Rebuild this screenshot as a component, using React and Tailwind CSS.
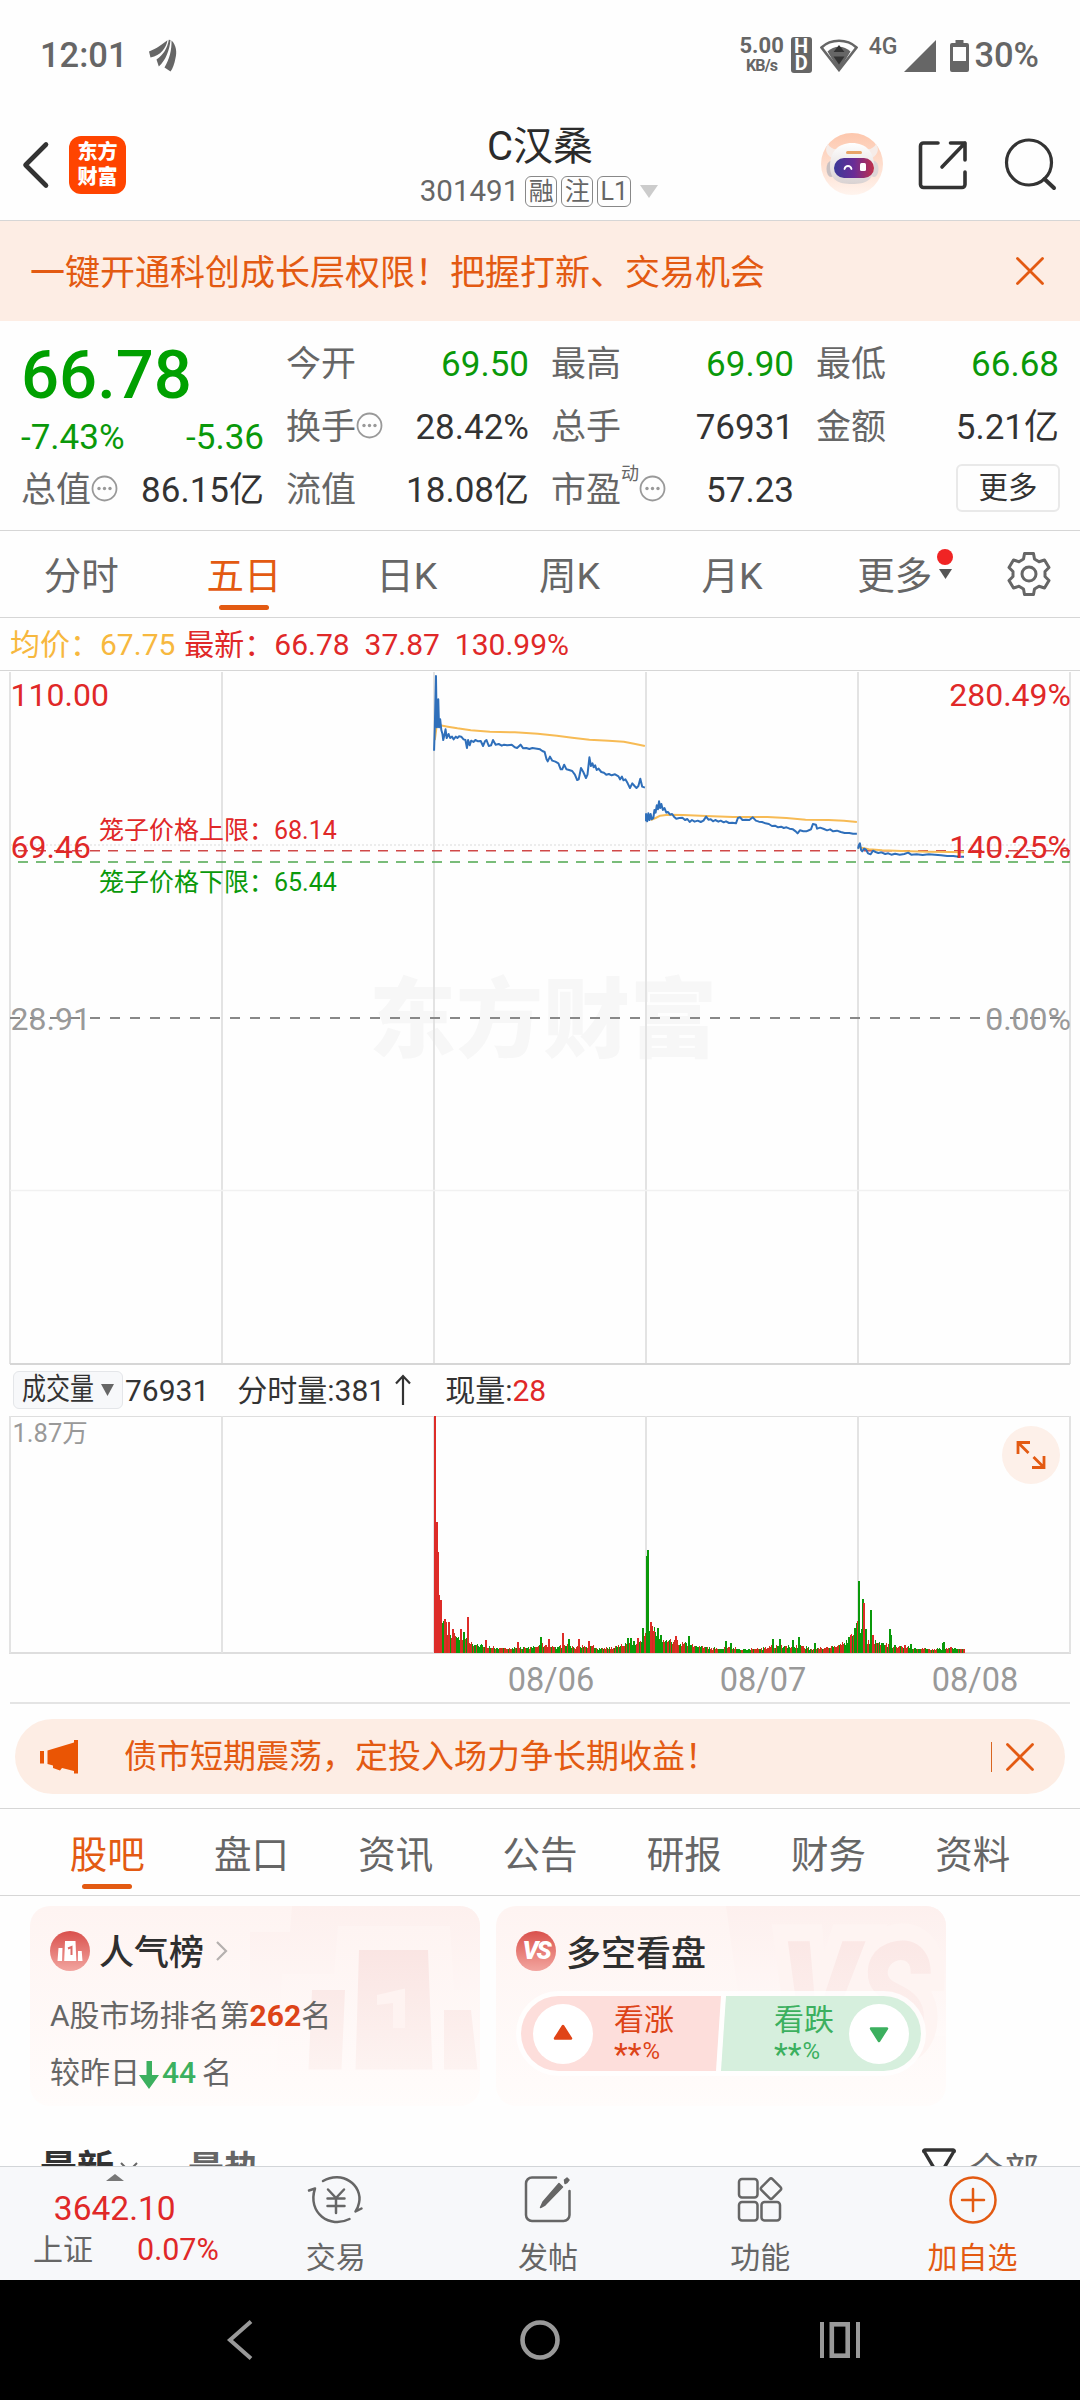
import React from "react";

const RED = "#e02828";
const GREEN = "#0a990a";
const ORANGE = "#e35a12";

/* ---------- small shared drawings ---------- */

function Dots() {
  return (
    <svg className="block h-[27px] w-[27px] shrink-0" viewBox="0 0 27 27" fill="none">
      <circle cx="13.5" cy="13.5" r="12" stroke="#999" strokeWidth="1.8" />
      <circle cx="8" cy="13.5" r="1.7" fill="#999" />
      <circle cx="13.5" cy="13.5" r="1.7" fill="#999" />
      <circle cx="19" cy="13.5" r="1.7" fill="#999" />
    </svg>
  );
}

function Cross() {
  return (
    <svg className="block h-[30px] w-[30px]" viewBox="0 0 30 30" stroke={ORANGE} strokeWidth="2.8" strokeLinecap="round">
      <path d="M2.5 2.5 27.5 27.5M27.5 2.5 2.5 27.5" />
    </svg>
  );
}

/* ---------- status bar ---------- */

function StatusBar() {
  return (
    <div className="flex h-[110px] items-center pl-[40px] pr-[41px] text-[#666]">
      <span className="text-[34.500px] font-medium leading-[34px]">12:01</span>
      <svg className="ml-[21px] h-[33px] w-[28px]" viewBox="0 0 28 33" fill="#666">
        <path d="M0 12.500C8 9.500 13 5 18.500 1.200 17 9 12 16.500 1.500 18.500Z" />
        <path d="M19.800.800 21.500 1C20.500 11 17 21 9.800 27.500L7.500 20.500C14 16.500 18.500 9 19.800.800Z" />
        <path d="M22.500 1.500C27.500 6 28 14 26.500 19 25.500 25 23.500 30 21.500 32.500L15.500 28.500C20.500 20 22.800 11 22.500 1.500Z" />
      </svg>
      <div className="ml-auto flex items-center">
        <div className="flex w-[42px] flex-col items-center font-bold">
          <span className="text-[22px] leading-[20px]">5.00</span>
          <span className="text-[16px] leading-[19px] tracking-[-0.8px]">KB/s</span>
        </div>
        <div className="ml-[8px] flex h-[36px] w-[21px] flex-col items-center justify-center rounded-[3px] bg-[#666] font-bold text-white">
          <span className="text-[20px] leading-[17px]">H</span>
          <span className="text-[20px] leading-[17px]">D</span>
        </div>
        <svg className="ml-[8px] h-[33px] w-[38px]" viewBox="0 0 38 33">
          <path d="M1.500 8.500C11-.5 27-.5 36.500 8.500L19 31Z" fill="#fff" stroke="#666" strokeWidth="2.600" />
          <path d="M7.500 12.500C14 6 24 6 30.500 12.500L19 31.500Z" fill="#666" />
          <path d="M13.500 13 19 6l5.500 7ZM13.500 17.500h11L19 25.500Z" fill="#333" />
        </svg>
        <span className="mb-[18px] ml-[11px] text-[23px] font-medium leading-[23px]">4G</span>
        <svg className="ml-[7px] h-[33px] w-[32px]" viewBox="0 0 32 33"><path d="M0 33 32 1V33Z" fill="#666" /></svg>
        <svg className="ml-[14px] h-[33px] w-[19px]" viewBox="0 0 19 33">
          <path d="M5.500 1h8v3H17a2 2 0 0 1 2 2v25a2 2 0 0 1-2 2H2a2 2 0 0 1-2-2V6a2 2 0 0 1 2-2h3.500ZM3 8v14h13V8Z" fill="#666" fillRule="evenodd" />
        </svg>
        <span className="ml-[5px] text-[34.500px] font-medium leading-[34px]">30%</span>
      </div>
    </div>
  );
}

/* ---------- header ---------- */

function Robot() {
  return (
    <svg className="mb-[2px] block h-[64px] w-[64px]" viewBox="0 0 64 64">
      <defs>
        <linearGradient id="rb" x1="0" y1="0" x2="0" y2="1">
          <stop offset="0" stopColor="#fdc7ad" />
          <stop offset="1" stopColor="#fff4ee" />
        </linearGradient>
        <linearGradient id="rv" x1="0" y1="0" x2="1" y2="0">
          <stop offset="0" stopColor="#3a3a98" />
          <stop offset=".5" stopColor="#6a2c96" />
          <stop offset="1" stopColor="#c0304a" />
        </linearGradient>
        <linearGradient id="rh" x1="0" y1="0" x2="0" y2="1">
          <stop offset="0" stopColor="#fff" />
          <stop offset="1" stopColor="#d9d2d2" />
        </linearGradient>
      </defs>
      <circle cx="32" cy="32" r="31" fill="url(#rb)" />
      <path d="M12 26C5 22 5 16 8 12c2 4 6 6 11 5ZM52 26c7-4 7-10 4-14-2 4-6 6-11 5Z" fill="#f6ece8" />
      <ellipse cx="11" cy="37" rx="4.500" ry="8" fill="#c8c0c2" />
      <ellipse cx="54" cy="37" rx="4.500" ry="8" fill="#ddd5d6" />
      <path d="M32 11C46 11 54 20 54 34S46 52 32 52 10 48 10 34 18 11 32 11Z" fill="url(#rh)" />
      <rect x="26" y="19" width="16" height="3" rx="1.500" fill="#e8a468" />
      <rect x="14" y="26" width="40" height="20" rx="10" fill="url(#rv)" />
      <path d="M24.500 37c1-4 6-4 7 0" stroke="#fff" strokeWidth="1.800" fill="none" strokeLinecap="round" />
      <rect x="40" y="31" width="6" height="8" rx="1.500" fill="#fff" />
    </svg>
  );
}

function Header() {
  return (
    <div className="grid h-[111px] grid-cols-[1fr_auto_1fr] border-b border-[#d6d6d6]">
      <div className="flex items-center pb-[1px] pl-[20px]">
        <svg className="h-[50px] w-[32px]" viewBox="0 0 32 50" fill="none" stroke="#333" strokeWidth="4.600" strokeLinecap="round" strokeLinejoin="round">
          <path d="M26 4.500 5.500 25 26 45.500" />
        </svg>
        <div className="ml-[17px] flex h-[58px] w-[57px] flex-col items-center justify-center rounded-[12px] bg-[#ff4400] text-[20px] font-black leading-[25px] text-white">
          <span>东方</span>
          <span>财富</span>
        </div>
      </div>
      <div className="flex flex-col items-center pt-[15px]">
        <div className="text-[40px] leading-[44px] text-[#2b2b2b]">C汉桑</div>
        <div className="mr-[2px] mt-[4px] flex h-[36px] items-center gap-[4px] text-[#666]">
          <span className="mr-[2px] text-[29.500px] leading-[36px]">301491</span>
          <span className="flex h-[31px] w-[32px] items-center justify-center rounded-[6px] border border-[#888] text-[25px] leading-[29px]">融</span>
          <span className="flex h-[31px] w-[32px] items-center justify-center rounded-[6px] border border-[#888] text-[25px] leading-[29px]">注</span>
          <span className="flex h-[31px] w-[34px] items-center justify-center rounded-[6px] border border-[#888] text-[25px] leading-[29px]">L1</span>
          <svg className="ml-[5px] h-[13px] w-[18px]" viewBox="0 0 18 13"><path d="M0 0h18L9 13Z" fill="#ccc" /></svg>
        </div>
      </div>
      <div className="flex items-center justify-end pr-[23px]">
        <Robot />
        <svg className="ml-[33px] h-[52px] w-[52px]" viewBox="0 0 52 52" fill="none" stroke="#333" strokeWidth="3.600" strokeLinecap="round" strokeLinejoin="round">
          <path d="M21 4H6.500a3 3 0 0 0-3 3v38.500a3 3 0 0 0 3 3H45a3 3 0 0 0 3-3V33" />
          <path d="M33.500 4H48v17M48 4 25 28" />
        </svg>
        <svg className="ml-[34px] h-[56px] w-[54px]" viewBox="0 0 54 56" fill="none" stroke="#333" strokeWidth="3.200" strokeLinecap="round">
          <circle cx="26" cy="25.500" r="22.500" />
          <path d="M41.500 42 51 51" strokeWidth="4" />
        </svg>
      </div>
    </div>
  );
}

function Banner() {
  return (
    <div className="flex h-[100px] items-center justify-between bg-[#fdede4] pl-[30px] pr-[35px]">
      <span className="pt-[5px] text-[35px] leading-[44px] text-[#e35a12]">一键开通科创成长层权限！把握打新、交易机会</span>
      <Cross />
    </div>
  );
}

/* ---------- quote summary ---------- */

function Stat({ label, sup, dots, value, green }) {
  return (
    <div className="flex h-[63px] items-center justify-between text-[35px] leading-[63px]">
      <span className="flex items-center text-[#666]">
        {label}
        {sup && <span className="self-start text-[18px] leading-[30px]">{sup}</span>}
        {dots && <span className="mb-[5px]"><Dots /></span>}
      </span>
      <span className={green ? "text-[#0a990a]" : "text-[#333]"}>{value}</span>
    </div>
  );
}

function Summary() {
  return (
    <div className="grid h-[210px] grid-cols-[243px_243px_243px_243px] gap-x-[22px] border-b border-[#d6d6d6] pl-[21px] pt-[12px]">
      <div>
        <div className="h-[84px] text-[67px] font-medium leading-[84px] text-[#00a000]">66.78</div>
        <div className="flex h-[42px] justify-between text-[35px] leading-[42px] text-[#0a990a]">
          <span>-7.43%</span>
          <span>-5.36</span>
        </div>
        <Stat label="总值" dots value="86.15亿" />
      </div>
      <div>
        <Stat label="今开" value="69.50" green />
        <Stat label="换手" dots value="28.42%" />
        <Stat label="流值" value="18.08亿" />
      </div>
      <div>
        <Stat label="最高" value="69.90" green />
        <Stat label="总手" value="76931" />
        <Stat label="市盈" sup="动" dots value="57.23" />
      </div>
      <div>
        <Stat label="最低" value="66.68" green />
        <Stat label="金额" value="5.21亿" />
        <div className="flex h-[63px] items-center justify-end pb-[5px]">
          <span className="mr-[-1px] flex h-[48px] w-[104px] items-center justify-center rounded-[6px] border-2 border-[#e9e9e9] text-[29.500px] leading-[40px] text-[#333]">更多</span>
        </div>
      </div>
    </div>
  );
}

/* ---------- period tabs ---------- */

function PeriodTabs() {
  const tabs = ["分时", "五日", "日K", "周K", "月K"];
  return (
    <div className="flex h-[87px] border-b border-[#d6d6d6] text-[37.500px] leading-[90px] text-[#666]">
      {tabs.map((t, i) => (
        <div key={t} className={i === 1 ? "relative w-[162.700px] text-center text-[#e35a12]" : "w-[162.700px] text-center"}>
          {t}
          {i === 1 && <span className="absolute bottom-[7px] left-[56px] h-[5px] w-[50px] rounded-full bg-[#e35a12]" />}
        </div>
      ))}
      <div className="relative w-[162.700px] text-center">
        更多
        <span className="absolute left-[124px] top-[18px] h-[16px] w-[16px] rounded-full bg-[#f02424]" />
        <svg className="absolute left-[125.500px] top-[38px] h-[10px] w-[13px]" viewBox="0 0 13 10"><path d="M0 0h13L6.500 10Z" fill="#555" /></svg>
      </div>
      <svg className="ml-[30px] mt-[20px] h-[46px] w-[46px]" viewBox="0 0 46 46" fill="none" stroke="#666" strokeWidth="3" strokeLinejoin="round">
        <path d="M18.500 2.500h9l1 5.500 4.500 2.700 5.500-1.700 4.500 7.500-4 4v5l4 4-4.500 7.500-5.500-1.700-4.500 2.700-1 5.500h-9l-1-5.500-4.500-2.700-5.500 1.700L3 29.500l4-4v-5l-4-4L7.500 9l5.500 1.700L17.500 8Z" />
        <circle cx="23" cy="23" r="7" />
      </svg>
    </div>
  );
}

function Legend() {
  return (
    <div className="flex h-[52px] whitespace-pre pl-[10px] text-[30px] leading-[54px]">
      <span className="text-[#f7b83e]">均价：67.75</span>
      <span className="ml-[9px] text-[#e02828]">最新：66.78  37.87  130.99%</span>
    </div>
  );
}

/* ---------- price chart ---------- */

const GRID_X = [10, 222, 434, 646, 858, 1070];

const PRICE = [
  "89,272 91,200 94,48 96,202 98,200 100,118 102,202 105,178 108,210 111,222 113,240 116,226 119,208 122,234 127,222 131,234 136,230 140,238 146,230 150,234 154,229 160,230 166,238 171,240 175,264 178,240 182,256 186,242 192,246 197,240 204,244 211,243 217,258 222,244 226,240 232,258 238,256 243,240 250,254 258,252 266,257 272,254 280,256 292,254 300,262 306,264 315,254 322,265 330,264 338,267 346,264 358,266 366,268 372,273 378,276 383,298 386,304 392,290 398,302 406,305 414,310 420,328 424,328 429,314 435,328 442,330 450,333 457,344 463,360 467,358 473,324 479,336 486,354 490,344 495,292 499,318 503,310 506,322 510,316 514,330 519,326 526,336 533,338 539,344 546,342 553,346 562,343 571,349 575,358 580,350 584,361 589,358 595,370 601,384 607,370 613,378 618,384 623,378 628,356 633,380 640,383",
  "643,484 643,462 646,484 649,460 652,480 655,462 658,478 662,474 665,450 668,458 671,436 674,448 677,424 680,444 683,432 687,450 691,444 696,458 700,456 706,464 711,462 716,470 722,476 730,474 738,473 745,480 751,477 757,486 763,480 770,485 778,482 786,486 793,482 800,470 806,479 812,478 818,484 824,480 832,485 838,482 846,487 852,484 860,489 868,488 878,490 883,474 889,472 895,480 904,479 913,480 922,472 930,482 938,485 946,486 955,490 964,492 972,498 980,497 988,502 996,500 1003,504 1010,502 1018,506 1027,508 1034,514 1039,520 1045,511 1054,514 1062,514 1070,510 1074,508 1079,492 1087,494 1090,506 1098,503 1108,507 1116,511 1124,508 1132,514 1142,512 1152,516 1162,519 1174,519 1184,521 1194,521",
  "1197,566 1199,556 1202,550 1205,570 1208,574 1213,566 1218,569 1223,580 1230,583 1236,572 1243,576 1250,579 1258,577 1268,582 1276,580 1284,584 1294,581 1306,584 1318,582 1328,578 1336,584 1350,583 1366,585 1382,583 1398,584 1414,586 1430,588 1446,588 1460,590 1474,590",
];

const AVERAGE = [
  "91,240 96,196 105,196 125,200 150,205 185,211 235,215 300,217 360,221 410,227 450,233 495,239 545,242 585,245 615,252 640,258",
  "655,480 668,474 680,467 700,464 740,465 800,468 870,471 960,471 1010,474 1060,479 1120,480 1160,482 1194,486",
  "1200,562 1225,568 1260,571 1310,573 1380,575 1440,576 1474,577",
];

function PriceChart() {
  return (
    <svg className="block h-[695px] w-[1080px]" viewBox="0 0 1080 695" fontFamily='Roboto, "Noto Sans CJK SC", sans-serif'>
      <rect x="0" y="0" width="1080" height="1" fill="#d6d6d6" />
      <text x="369" y="381" fontSize="87" fontWeight="900" fill="#f7f7f7">东方财富</text>
      {GRID_X.map((x) => (
        <rect key={x} x={x - 1} y="2" width="2" height="692" fill="#e3e3e3" />
      ))}
      <rect x="10" y="693" width="1060" height="2" fill="#d6d6d6" />
      <path d="M10 520.500H1070" stroke="#f1f1f1" strokeWidth="1.500" />
      <path d="M10 175H1070" stroke="#e6e6e6" strokeWidth="1.500" strokeDasharray="2 2" />
      <path d="M10 348H1070" stroke="#888" strokeWidth="2" strokeDasharray="10 10" />
      <path d="M18 180.700H1070" stroke="#d04848" strokeWidth="1.400" strokeDasharray="10 8" />
      <path d="M18 192H1070" stroke="#4da64d" strokeWidth="1.400" strokeDasharray="10 8" />
      <g transform="translate(400 -10) scale(.38265 .33333)" fill="none" strokeLinejoin="round">
        {AVERAGE.map((p, i) => (
          <polyline key={i} points={p} stroke="#f7bb55" strokeWidth="2" vectorEffect="non-scaling-stroke" />
        ))}
        {PRICE.map((p, i) => (
          <polyline key={i} points={p} stroke="#2f6fba" strokeWidth="2" vectorEffect="non-scaling-stroke" />
        ))}
      </g>
      <g fontSize="32">
        <text x="10.500" y="35.500" fill={RED}>110.00</text>
        <text x="10.500" y="187.500" fill={RED}>69.46</text>
        <text x="10.500" y="360" fill="#999">28.91</text>
        <text x="1071" y="35.500" fill={RED} textAnchor="end">280.49%</text>
        <text x="1071" y="187.500" fill={RED} textAnchor="end">140.25%</text>
        <text x="1071" y="360" fill="#999" textAnchor="end">0.00%</text>
      </g>
      <g fontSize="25">
        <text x="99" y="169" fill={RED}>笼子价格上限：68.14</text>
        <text x="99" y="221" fill={GREEN}>笼子价格下限：65.44</text>
      </g>
    </svg>
  );
}

/* ---------- volume chart ---------- */

const ENVELOPE = [
  [434, 100], [435, 130], [437, 90], [439, 55], [441, 34], [445, 30], [450, 24], [456, 16], [462, 18], [468, 16], [472, 9],
  [482, 8], [500, 5], [530, 6], [546, 10], [556, 6], [566, 9], [575, 6], [590, 8], [598, 5], [612, 6], [624, 10], [636, 12],
  [643, 15], [646, 30], [650, 30], [656, 22], [662, 15], [680, 11], [690, 11], [700, 7], [712, 5], [735, 6], [742, 4],
  [762, 5], [775, 8], [790, 7], [800, 8], [812, 4], [832, 7], [845, 11], [852, 20], [857, 30], [862, 30], [866, 14],
  [873, 12], [884, 9], [900, 7], [915, 6], [930, 4], [955, 5], [964, 4],
];

const SPIKES = [
  [434, 100, 1], [434, 237, 1], [436, 131, 1], [437, 101, 1], [438, 58, 1], [440, 53, 1], [444, 34, 1], [448, 31, 1],
  [452, 24, 1], [460, 24, 1], [463, 21, 0], [467, 36, 1], [485, 13, 1], [517, 11, 1], [540, 16, 0], [548, 14, 1],
  [562, 20, 1], [568, 14, 0], [578, 14, 1], [588, 12, 1], [627, 15, 0], [630, 15, 0], [637, 15, 1], [642, 25, 0],
  [646, 97, 0], [647, 103, 0], [650, 31, 1], [653, 22, 1], [657, 25, 0], [660, 18, 0], [675, 17, 1], [688, 17, 0],
  [725, 12, 0], [730, 10, 0], [772, 14, 0], [779, 14, 0], [792, 13, 0], [798, 16, 0], [814, 10, 0], [850, 18, 1],
  [854, 25, 0], [857, 32, 1], [858, 72, 0], [862, 54, 0], [863, 50, 1], [865, 24, 0], [870, 43, 0], [872, 18, 1],
  [881, 10, 0], [889, 24, 0], [890, 18, 0], [904, 8, 1], [910, 9, 0], [942, 10, 0], [943, 11, 0], [950, 6, 1], [963, 4, 1],
];

function envelopeAt(x) {
  for (let i = 1; i < ENVELOPE.length; i++) {
    const [x1, h1] = ENVELOPE[i];
    if (x <= x1) {
      const [x0, h0] = ENVELOPE[i - 1];
      return h0 + ((h1 - h0) * (x - x0)) / (x1 - x0);
    }
  }
  return 3;
}

function buildBars() {
  const bars = [];
  let seed = 20250808;
  const next = () => {
    seed = (seed * 1103515245 + 12345) % 2147483648;
    return seed / 2147483648;
  };
  let up = 1;
  for (let x = 434; x <= 963; x++) {
    if (next() < 0.42) up = 1 - up;
    const h = Math.max(2, envelopeAt(x) * (0.65 + next() * 0.45));
    bars.push([x, h, x < 439 ? 1 : up]);
  }
  return bars;
}

const BARS = buildBars();

function VolumeChart() {
  return (
    <div className="relative h-[238px]">
      <svg className="block h-[238px] w-[1080px]" viewBox="0 0 1080 238" shapeRendering="crispEdges" fontFamily='Roboto, "Noto Sans CJK SC", sans-serif'>
        <rect x="9" y="0" width="1062" height="1" fill="#dedede" />
        <rect x="9" y="236" width="1062" height="2" fill="#dedede" />
        {GRID_X.map((x) => (
          <rect key={x} x={x - 1} y="0" width="2" height="237" fill="#e3e3e3" />
        ))}
        {BARS.map(([x, h, up]) => (
          <rect key={x} x={x} y={237 - h} width="1" height={h} fill={up ? "#d0301f" : "#0a990a"} />
        ))}
        {SPIKES.map(([x, h, up], i) => (
          <rect key={i} x={x} y={237 - h} width={h > 90 ? 2 : 1.5} height={h} fill={up ? "#dd2c28" : "#0a990a"} />
        ))}
        <text x="12.500" y="26" fontSize="25.500" fill="#999">1.87万</text>
      </svg>
      <div className="absolute right-[20px] top-[10px] flex h-[58px] w-[58px] items-center justify-center rounded-full bg-[#fdf0e9]">
        <svg className="h-[30px] w-[30px]" viewBox="0 0 30 30" fill="none" stroke={ORANGE} strokeWidth="2.800">
          <path d="M2 14V2.500h12M2.500 3l10 10M28 16v11.500H16M27.500 27l-10-10" />
        </svg>
      </div>
    </div>
  );
}

function VolumeHeader() {
  return (
    <div className="flex h-[51px] items-center whitespace-pre pl-[13px] text-[30px] leading-[50px] text-[#333]">
      <div className="mb-[1px] flex h-[38px] w-[110px] items-center rounded-[6px] border border-[#e4e6e9] bg-[#f7f8fa] pl-[8px]">
        <span className="block w-[72px] pb-[2px] leading-[34px]">
          <span className="inline-block origin-left scale-x-[0.8]">成交量</span>
        </span>
        <svg className="ml-[7px] h-[12px] w-[13px]" viewBox="0 0 13 12"><path d="M0 0h13L6.500 12Z" fill="#666" /></svg>
      </div>
      <span className="ml-[2px] mt-px">76931</span>
      <span className="ml-[28px] mt-px">分时量:381</span>
      <svg className="ml-[10px] mb-[2px] h-[32px] w-[16px]" viewBox="0 0 16 32" fill="none" stroke="#333" strokeWidth="2.200"><path d="M8 31V2M1 9.500 8 2l7 7.500" /></svg>
      <span className="ml-[34px] mt-px">现量:<span className="text-[#e02828]">28</span></span>
    </div>
  );
}

function Dates() {
  return (
    <div className="h-[50px] px-[10px]">
      <div className="grid h-[50px] grid-cols-5 border-b-2 border-[#e4e4e4] text-center text-[32.500px] leading-[52px] text-[#999]">
        <span />
        <span />
        <span className="pl-[22px]">08/06</span>
        <span className="pl-[22px]">08/07</span>
        <span className="pl-[22px]">08/08</span>
      </div>
    </div>
  );
}

/* ---------- notice ---------- */

function Notice() {
  return (
    <div className="h-[105px] border-b border-[#d6d6d6] px-[15px] pt-[15px]">
      <div className="flex h-[75px] items-center rounded-full bg-[#fdede4] pl-[25px] pr-[30px]">
        <svg className="h-[34px] w-[39px]" viewBox="0 0 39 34" fill="#ea5504">
          <path d="M0 11h4v12.500H0ZM7.500 10.500 34 2.500V0h4v33.500h-4V31l-12-3-2 2.500L13 28v-2.500L7.500 24Z" />
        </svg>
        <span className="ml-[45px] text-[33px] leading-[40px] text-[#e35a12]">债市短期震荡，定投入场力争长期收益！</span>
        <span className="ml-auto h-[30px] w-px bg-[#d9651f]" />
        <span className="ml-[13px]"><Cross /></span>
      </div>
    </div>
  );
}

function SectionTabs() {
  const tabs = ["股吧", "盘口", "资讯", "公告", "研报", "财务", "资料"];
  return (
    <div className="grid h-[87px] grid-cols-7 border-b border-[#d6d6d6] px-[35px] text-center text-[37.500px] leading-[92px] text-[#666]">
      {tabs.map((t, i) => (
        <div key={t} className={i === 0 ? "relative h-[86px] text-[#e35a12]" : "h-[86px]"}>
          {t}
          {i === 0 && <span className="absolute bottom-[6px] left-[47px] h-[5px] w-[50px] rounded-full bg-[#e35a12]" />}
        </div>
      ))}
    </div>
  );
}

/* ---------- cards ---------- */

function PodiumArt() {
  return (
    <svg className="absolute inset-0 h-full w-full" viewBox="0 0 450 200">
      <defs>
        <linearGradient id="pa" x1="0" y1="0" x2="0" y2="1">
          <stop offset="0" stopColor="#fdf0ee" />
          <stop offset="1" stopColor="#fffaf9" />
        </linearGradient>
        <linearGradient id="pb" x1="0" y1="0" x2="0" y2="1">
          <stop offset="0" stopColor="#fae5e3" />
          <stop offset="1" stopColor="#fdf3f1" />
        </linearGradient>
        <linearGradient id="pc" x1="0" y1="0" x2="0" y2="1">
          <stop offset="0" stopColor="#fef4f2" />
          <stop offset="1" stopColor="#fffaf9" />
        </linearGradient>
      </defs>
      <path d="M262 0H450V147H220V26H260Z" fill="url(#pa)" />
      <path d="M308 20H420L424 84H450V165H246L252 68H304Z" fill="url(#pc)" />
      <path d="M329 44H398L402.500 163.500H325.500ZM282 84H315L311.500 163.500H278.500ZM414 104H441L447.500 163.500H414Z" fill="url(#pb)" />
      <path d="M347 89 375 82.500V122H363V97L347 99Z" fill="#fef3f1" />
    </svg>
  );
}

function PopularityCard() {
  return (
    <div className="relative h-[200px] w-[450px] overflow-hidden rounded-[20px] bg-linear-to-b from-[#fef4f2] to-[#fffcfb]">
      <PodiumArt />
      <div className="relative pl-[20px] pt-[25px]">
        <div className="flex h-[40px] items-center">
          <svg className="h-[40px] w-[40px]" viewBox="0 0 40 40">
            <defs>
              <linearGradient id="ic" x1="0" y1="0" x2="0" y2="1">
                <stop offset="0" stopColor="#d9504c" />
                <stop offset="1" stopColor="#f2a5a0" />
              </linearGradient>
            </defs>
            <circle cx="20" cy="20" r="20" fill="url(#ic)" />
            <path d="M15 10h10.500l.8 20H14.200ZM8.500 17h4l-.5 13H7.500ZM28 20h3.700l.8 10H28Z" fill="#fff" />
            <path d="M18 17.500 21.500 16v8" stroke="#dc6a66" strokeWidth="2" fill="none" />
          </svg>
          <span className="ml-[9px] mt-[6px] text-[35px] font-medium leading-[40px] text-[#2f2f2f]">人气榜</span>
          <svg className="ml-[12px] h-[22px] w-[12px]" viewBox="0 0 12 22" fill="none" stroke="#b5b0af" strokeWidth="2.200"><path d="M1 2l9 9-9 9" /></svg>
        </div>
        <div className="mt-[24px] h-[42px] text-[30px] leading-[42px] text-[#666]">
          A股市场排名第<span className="font-bold text-[#dd4418]">262</span>名
        </div>
        <div className="mt-[15px] flex h-[42px] items-center text-[30px] leading-[42px] text-[#666]">
          <span>较昨日</span>
          <svg className="ml-[-1px] mt-[2px] h-[29px] w-[20px]" viewBox="0 0 20 29" fill="#3cb05f"><path d="M7.500 1h5.500v14H20L10 29 0 15h7.500Z" /></svg>
          <span className="ml-[3px] font-medium text-[#3cb05f]">44</span>
          <span className="ml-[6px]">名</span>
        </div>
      </div>
    </div>
  );
}

function MaskedRate() {
  return (
    <div className="flex h-[32px] items-center whitespace-nowrap">
      <span className="mt-[5px] text-[32px] leading-[32px]">**</span>
      <span className="ml-px text-[24px] leading-[32px]">%</span>
    </div>
  );
}

function VersusCard() {
  return (
    <div className="relative h-[200px] w-[450px] overflow-hidden rounded-[20px] bg-linear-to-b from-[#fef4f2] to-[#fffcfb]">
      <svg className="absolute inset-0 h-full w-full" viewBox="0 0 450 200" fontFamily="Roboto, sans-serif">
        <defs>
          <linearGradient id="vs" x1="0" y1="0" x2="0" y2="1">
            <stop offset="0.2" stopColor="#fbe8e6" />
            <stop offset="1" stopColor="#fef5f3" />
          </linearGradient>
        </defs>
        <path d="M230 0H450V130H248Z" fill="url(#pa)" />
        <text x="284" y="142" fontStyle="italic" fontWeight="900" fontSize="150" fill="url(#vs)" stroke="#fef4f2" strokeWidth="34" paintOrder="stroke" textLength="150" lengthAdjust="spacingAndGlyphs">VS</text>
      </svg>
      <div className="relative pl-[20px] pt-[25px]">
        <div className="flex h-[40px] items-center">
          <span className="flex h-[40px] w-[40px] items-center justify-center rounded-full bg-linear-to-b from-[#d9504c] to-[#f2a5a0] text-[25px] font-black italic leading-[40px] tracking-[-2px] text-white">VS</span>
          <span className="ml-[10px] mt-[8px] text-[35px] font-medium leading-[40px] text-[#2f2f2f]">多空看盘</span>
        </div>
        <div className="mt-[20px] h-[85px] w-[410px] rounded-full bg-white/80 p-[5px]">
          <div className="relative flex h-[75px] w-[400px] justify-between overflow-hidden rounded-full">
            <svg className="absolute inset-0 h-full w-full" viewBox="0 0 400 75">
              <path d="M0 0H200L195 75H0Z" fill="#fddedb" />
              <path d="M205 0H400V75H200Z" fill="#d6efdd" />
            </svg>
            <div className="relative flex items-center pl-[12px]">
              <span className="flex h-[60px] w-[60px] items-center justify-center rounded-full bg-white">
                <svg className="mb-[3px] h-[16px] w-[20px]" viewBox="0 0 20 16"><path d="M10 2 18 14.500H2Z" fill="#e04417" stroke="#e04417" strokeWidth="2.500" strokeLinejoin="round" /></svg>
              </span>
              <div className="ml-[21px] text-[#dd4418]">
                <div className="text-[30px] leading-[40px]">看涨</div>
                <div className="-mt-[5px]"><MaskedRate /></div>
              </div>
            </div>
            <div className="relative flex items-center pr-[12px]">
              <div className="mr-[15px] text-[#3cb05f]">
                <div className="text-[30px] leading-[40px]">看跌</div>
                <div className="-mt-[5px]"><MaskedRate /></div>
              </div>
              <span className="flex h-[60px] w-[60px] items-center justify-center rounded-full bg-white">
                <svg className="mt-[3px] h-[16px] w-[20px]" viewBox="0 0 20 16"><path d="M10 14 18 1.500H2Z" fill="#3cb05f" stroke="#3cb05f" strokeWidth="2.500" strokeLinejoin="round" /></svg>
              </span>
            </div>
          </div>
        </div>
      </div>
    </div>
  );
}

function Feed() {
  return (
    <div className="h-[270px] overflow-hidden">
      <div className="flex gap-[16px] pl-[30px] pt-[10px]">
        <PopularityCard />
        <VersusCard />
      </div>
      <div className="mt-[42px] flex h-[44px] items-start pl-[40px] pr-[41px] leading-[44px]">
        <span className="text-[37px] font-bold text-[#333]">最新</span>
        <svg className="ml-[6px] mt-[14px] h-[12px] w-[18px]" viewBox="0 0 18 12" fill="none" stroke="#666" strokeWidth="2"><path d="M1 1l8 8 8-8" /></svg>
        <span className="ml-[50px] text-[36px] font-bold text-[#666]">最热</span>
        <svg className="ml-auto h-[40px] w-[34px]" viewBox="0 0 34 40" fill="none" stroke="#333" strokeWidth="3.400" strokeLinejoin="round"><path d="M3 2h28a1 1 0 0 1 .5 2L22 20v12l-10 5V20L2.500 4a1 1 0 0 1 .5-2Z" /></svg>
        <span className="ml-[13px] mt-[2px] text-[35px] text-[#666]">全部</span>
      </div>
    </div>
  );
}

/* ---------- bottom bar ---------- */

function BarItem({ label, accent, children }) {
  return (
    <div className={accent ? "flex w-[212.300px] flex-col items-center text-[#e35a12]" : "flex w-[212.300px] flex-col items-center text-[#666]"}>
      <svg className="mt-[6px] h-[54px] w-[60px]" viewBox="0 0 60 54" fill="none" stroke="currentColor" strokeWidth="2.500" strokeLinecap="round" strokeLinejoin="round">
        {children}
      </svg>
      <span className="mt-[11px] text-[30px] leading-[40px]">{label}</span>
    </div>
  );
}

function BottomBar() {
  return (
    <div className="flex h-[114px] border-t border-[#d2d5d8] bg-[#f7f8fa]">
      <div className="flex w-[229.500px] flex-col items-center">
        <svg className="mt-[7px] h-[7px] w-[18px]" viewBox="0 0 18 7"><path d="M0 7 9 0l9 7Z" fill="#777" /></svg>
        <span className="mt-[8px] text-[33.500px] leading-[40px] text-[#e02828]">3642.10</span>
        <div className="flex w-full items-center pl-[33px] pr-[10px] text-[30px] leading-[40px]">
          <span className="text-[#666]">上证</span>
          <span className="ml-[44px] mt-px text-[30.500px] text-[#e02828]">0.07%</span>
        </div>
      </div>
      <BarItem label="交易">
        <path d="M17 8C36-3 57 12 53 30q-1 5-3.500 8.500l6-3M43.500 46C24 56 1 40 9 15.500L3 17.500" />
        <path d="M22 16.500l8 8.500 8-8.500M21.500 25.500h17M21.500 33h17M30 25v15" />
      </BarItem>
      <BarItem label="发帖">
        <path d="M38 4.500H14a6 6 0 0 0-6 6V42a6 6 0 0 0 6 6H45.500a6 6 0 0 0 6-6V18" />
        <path d="M41 10.500 44.500 14 27 32l-4.500 2.500L25 29ZM46.500 7l2.500-2 2 2-2 2.500-2 1Z" fill="currentColor" strokeWidth="1.500" />
      </BarItem>
      <BarItem label="功能">
        <rect x="9" y="6" width="18.500" height="18.500" rx="3" />
        <rect x="9" y="29" width="18.500" height="18.500" rx="3" />
        <rect x="31.500" y="29" width="18.500" height="18.500" rx="3" />
        <path d="M39.500 6.200q1.500-1.500 3 0l8 8q1.500 1.500 0 3l-8 8q-1.500 1.500-3 0l-8-8q-1.500-1.500 0-3Z" />
      </BarItem>
      <BarItem label="加自选" accent>
        <circle cx="30" cy="27" r="22.500" />
        <path d="M30 16v22M19 27h22" />
      </BarItem>
    </div>
  );
}

function SystemNav() {
  return (
    <div className="flex h-[120px] items-center justify-between bg-black pl-[226px] pr-[219px]">
      <svg className="h-[40px] w-[28px]" viewBox="0 0 28 40" fill="none" stroke="#999" strokeWidth="4"><path d="M25 1.500 4 20 25 38.500" /></svg>
      <svg className="ml-[7px] h-[40px] w-[40px]" viewBox="0 0 40 40" fill="none" stroke="#999" strokeWidth="4.600"><circle cx="20" cy="20" r="17.500" /></svg>
      <svg className="h-[36px] w-[42px]" viewBox="0 0 42 36" fill="none" stroke="#999" strokeWidth="4.600"><path d="M3 0v36M39 0v36" strokeWidth="4" /><rect x="12.800" y="2.300" width="15.900" height="31.400" /></svg>
    </div>
  );
}

export default function App() {
  return (
    <div className='h-[2400px] w-[1080px] overflow-hidden bg-[#fefefe] font-[Roboto,"Noto_Sans_CJK_SC",sans-serif]' lang="zh-CN">
      <StatusBar />
      <Header />
      <Banner />
      <Summary />
      <PeriodTabs />
      <Legend />
      <PriceChart />
      <VolumeHeader />
      <VolumeChart />
      <Dates />
      <Notice />
      <SectionTabs />
      <Feed />
      <BottomBar />
      <SystemNav />
    </div>
  );
}
